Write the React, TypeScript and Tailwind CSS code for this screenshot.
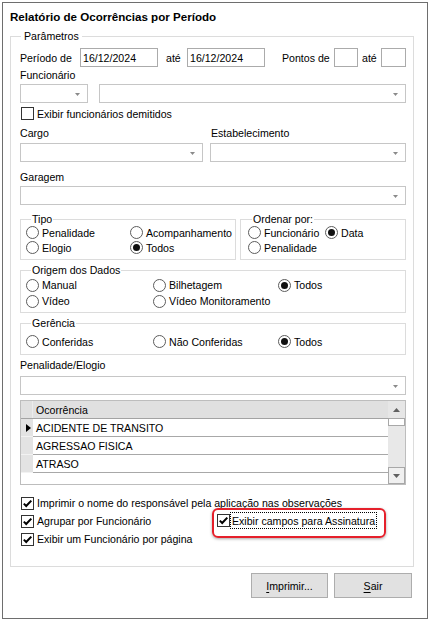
import React from "react";

function Arrow({ up = false, color = "#8a8a8a", w = 5, h = 3 }: { up?: boolean; color?: string; w?: number; h?: number }) {
  return (
    <svg width={w} height={h} viewBox={`0 0 ${w} ${h}`} className="shrink-0">
      {up ? (
        <polygon points={`0,${h} ${w},${h} ${w / 2},0`} fill={color} />
      ) : (
        <polygon points={`0,0 ${w},0 ${w / 2},${h}`} fill={color} />
      )}
    </svg>
  );
}

function Combo({ className = "" }: { className?: string }) {
  return (
    <div className={`h-[19px] border border-[#c6c6c6] bg-white flex items-center justify-end pr-[7px] ${className}`}>
      <div className="mt-[2px]">
        <Arrow />
      </div>
    </div>
  );
}

function TextBox({ value = "", className = "" }: { value?: string; className?: string }) {
  return (
    <div className={`h-[19px] border border-[#ababab] bg-white flex items-center pl-[2px] leading-[14px] ${className}`}>
      {value}
    </div>
  );
}

function Check({ checked }: { checked: boolean }) {
  return (
    <span className="w-[13px] h-[13px] border border-[#333333] bg-white flex items-center justify-center shrink-0">
      {checked && (
        <svg width="11" height="11" viewBox="0 0 11 11">
          <path d="M1.8 5.6 L4.2 8 L9.3 2.6" stroke="#000" strokeWidth="2" fill="none" />
        </svg>
      )}
    </span>
  );
}

function Radio({ checked = false, label }: { checked?: boolean; label: string }) {
  return (
    <div className="flex items-center h-full">
      <svg width="13" height="13" viewBox="0 0 13 13" className="shrink-0">
        <circle cx="6.5" cy="6.5" r="6" fill="white" stroke="#5c5c5c" strokeWidth="1" />
        {checked && <circle cx="6.5" cy="6.5" r="3.5" fill="#111" />}
      </svg>
      <span className="ml-[3px] whitespace-nowrap leading-[14px]">{label}</span>
    </div>
  );
}

function Legend({ children, left = 10 }: { children: React.ReactNode; left?: number }) {
  return (
    <span
      className={`absolute top-[-8px] bg-white px-[1px] leading-[14px] whitespace-nowrap ${left === 10 ? "left-[10px]" : "left-[11px]"}`}
    >
      {children}
    </span>
  );
}

export default function App() {
  return (
    <div className="w-[430px] h-[623px] bg-white pt-[2px] pl-[2px] font-['Liberation_Sans',Arial,sans-serif] text-[10.6px] text-black overflow-hidden">
      <div className="w-[426px] h-[617px] border border-[#6e6e6e] flex flex-col">
        {/* Title */}
        <div className="h-[28px] flex items-center pl-[7px] font-bold text-[11.6px] leading-[14px] text-[#000]">
          Relatório de Ocorrências por Período
        </div>

        {/* Parâmetros group */}
        <div className="relative ml-[7px] mt-[5px] w-[404px] h-[531px] border border-[#dcdcdc] pl-[9px] pr-[7px] flex flex-col">
          <span className="absolute top-[-8px] left-[10px] bg-white px-[3px] leading-[14px]">Parâmetros</span>

          {/* Row 1 */}
          <div className="mt-[11px] h-[19px] flex items-center leading-[14px]">
            <span className="w-[60px] shrink-0">Período de</span>
            <TextBox value="16/12/2024" className="w-[78px] shrink-0" />
            <span className="w-[29px] pl-[8px] shrink-0">até</span>
            <TextBox value="16/12/2024" className="w-[78px] shrink-0" />
            <span className="w-[69px] pl-[17px] shrink-0 whitespace-nowrap">Pontos de</span>
            <TextBox className="w-[24px] shrink-0" />
            <span className="w-[23px] pl-[4px] shrink-0">até</span>
            <TextBox className="w-[25px] shrink-0" />
          </div>

          {/* Funcionário */}
          <div className="h-[16px] flex items-center leading-[14px]">Funcionário</div>
          <div className="mt-[1px] flex">
            <Combo className="w-[68px] shrink-0" />
            <Combo className="ml-[11px] flex-1" />
          </div>

          {/* Exibir funcionários demitidos */}
          <div className="mt-[4px] h-[13px] flex items-center pl-[1px]">
            <Check checked={false} />
            <span className="ml-[3px] leading-[14px]">Exibir funcionários demitidos</span>
          </div>

          {/* Cargo / Estabelecimento */}
          <div className="mt-[5px] h-[16px] flex items-center leading-[14px]">
            <span className="w-[191px] shrink-0">Cargo</span>
            <span>Estabelecimento</span>
          </div>
          <div className="mt-[2px] flex">
            <Combo className="w-[183px] shrink-0" />
            <Combo className="ml-[7px] flex-1" />
          </div>

          {/* Garagem */}
          <div className="mt-[7px] h-[16px] flex items-center leading-[14px]">Garagem</div>
          <div className="mt-[1px] flex">
            <Combo className="flex-1" />
          </div>

          {/* Tipo / Ordenar por */}
          <div className="mt-[14px] flex">
            <div className="relative w-[216px] h-[41px] shrink-0 border border-[#dcdcdc] pl-[5px] pt-[5px]">
              <Legend>Tipo</Legend>
              <div className="grid grid-cols-[104px_1fr] grid-rows-[15px_15px]">
                <Radio label="Penalidade" />
                <Radio label="Acompanhamento" />
                <Radio label="Elogio" />
                <Radio label="Todos" checked />
              </div>
            </div>
            <div className="relative ml-[4px] flex-1 h-[41px] border border-[#dcdcdc] pl-[7px] pt-[5px]">
              <Legend left={11}>Ordenar por:</Legend>
              <div className="grid grid-cols-[77px_1fr] grid-rows-[15px_15px]">
                <Radio label="Funcionário" />
                <Radio label="Data" checked />
                <Radio label="Penalidade" />
              </div>
            </div>
          </div>

          {/* Origem dos Dados */}
          <div className="relative mt-[10px] h-[43px] border border-[#dcdcdc] pl-[5px] pt-[6px]">
            <Legend>Origem dos Dados</Legend>
            <div className="grid grid-cols-[127px_125px_1fr] grid-rows-[16px_16px]">
              <Radio label="Manual" />
              <Radio label="Bilhetagem" />
              <Radio label="Todos" checked />
              <Radio label="Vídeo" />
              <Radio label="Vídeo Monitoramento" />
            </div>
          </div>

          {/* Gerência */}
          <div className="relative mt-[10px] h-[32px] border border-[#dcdcdc] pl-[5px] pt-[10px]">
            <Legend>Gerência</Legend>
            <div className="grid grid-cols-[127px_125px_1fr] grid-rows-[15px]">
              <Radio label="Conferidas" />
              <Radio label="Não Conferidas" />
              <Radio label="Todos" checked />
            </div>
          </div>

          {/* Penalidade/Elogio */}
          <div className="mt-[2px] h-[16px] flex items-center leading-[14px]">Penalidade/Elogio</div>
          <div className="mt-[3px] flex">
            <Combo className="flex-1" />
          </div>

          {/* Grid */}
          <div className="mt-[5px] h-[85px] border border-[#bdbdbd] flex">
            <div className="flex-1 flex flex-col">
              <div className="h-[18px] flex bg-[#e0e0e0] border-b border-[#a3a3a3]">
                <div className="w-[12px] shrink-0 border-r border-[#ececec]" />
                <div className="flex items-center pl-[3px] leading-[14px]">Ocorrência</div>
              </div>
              {["ACIDENTE DE TRANSITO", "AGRESSAO FISICA", "ATRASO"].map((t, i) => (
                <div key={t} className="h-[18px] flex">
                  <div className="w-[12px] shrink-0 bg-[#e3e3e3] border-b border-[#f2f2f2] flex items-center pl-[5px]">
                    {i === 0 && (
                      <svg width="5" height="8" viewBox="0 0 5 8">
                        <polygon points="0,0 5,4 0,8" fill="#000" />
                      </svg>
                    )}
                  </div>
                  <div className="flex-1 border-b border-[#a8a8a8] flex items-center pl-[3px] leading-[14px]">{t}</div>
                </div>
              ))}
              <div className="flex-1 bg-white" />
            </div>
            <div className="w-[17px] shrink-0 flex flex-col bg-[#e8e8e8]">
              <div className="h-[17px] flex items-center justify-center bg-[#e6e6e6]">
                <Arrow up color="#606060" w={7} h={4} />
              </div>
              <div className="h-[8px] bg-white border border-[#a8a8a8]" />
              <div className="flex-1" />
              <div className="h-[17px] bg-[#f0f0f0] border border-[#a8a8a8] flex items-center justify-center">
                <Arrow color="#606060" w={7} h={4} />
              </div>
            </div>
          </div>

          {/* Bottom checkboxes */}
          <div className="mt-[9px] h-[18px] flex items-center pl-[1px]">
            <Check checked />
            <span className="ml-[3px] leading-[14px] whitespace-nowrap">
              Imprimir o nome do responsável pela aplicação nas observações
            </span>
          </div>
          <div className="h-[18px] grid grid-cols-[197px_1fr]">
            <div className="flex items-center pl-[1px]">
              <Check checked />
              <span className="ml-[3px] leading-[14px] whitespace-nowrap">Agrupar por Funcionário</span>
            </div>
            <div className="relative flex items-start">
              <div className="mt-[2px]">
                <Check checked />
              </div>
              <span className="h-[17px] border border-dotted border-black px-[1px] flex items-center leading-[14px] whitespace-nowrap">
                Exibir campos para Assinatura
              </span>
              <div className="absolute left-[-5px] top-[-4px] w-[174px] h-[30px] rounded-[6px] border-2 border-[#e5202b] shadow-[0_1px_3px_rgba(0,0,0,0.35)] pointer-events-none" />
            </div>
          </div>
          <div className="h-[18px] flex items-center pl-[1px]">
            <Check checked />
            <span className="ml-[3px] leading-[14px] whitespace-nowrap">Exibir um Funcionário por página</span>
          </div>
        </div>

        {/* Buttons */}
        <div className="mt-[6px] flex justify-end pr-[15px] gap-[6px]">
          <button className="w-[77px] h-[25px] bg-[#e1e1e1] border border-[#adadad] flex items-center justify-center leading-[14px]">
            <span>
              <span className="underline underline-offset-[2px]">I</span>mprimir...
            </span>
          </button>
          <button className="w-[78px] h-[25px] bg-[#e1e1e1] border border-[#adadad] flex items-center justify-center leading-[14px]">
            <span>
              <span className="underline underline-offset-[2px]">S</span>air
            </span>
          </button>
        </div>
      </div>
    </div>
  );
}
